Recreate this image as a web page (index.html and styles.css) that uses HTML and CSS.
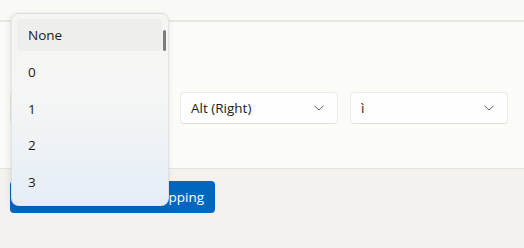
FILE: index.html
```html
<!DOCTYPE html>
<html>
<head>
<meta charset="utf-8">
<link rel="stylesheet" href="styles.css">
</head>
<body>
<div class="page">
  <div class="topband"></div>
  <div class="content">
    <div class="row">
      <div class="combo"><span></span><svg class="chev" viewBox="0 0 10 6"><path d="M0.5 0.8 L5 5 L9.5 0.8"/></svg></div>
      <div class="combo"><span>Alt (Right)</span><svg class="chev" viewBox="0 0 10 6"><path d="M0.5 0.8 L5 5 L9.5 0.8"/></svg></div>
      <div class="combo"><span>ì</span><svg class="chev" viewBox="0 0 10 6"><path d="M0.5 0.8 L5 5 L9.5 0.8"/></svg></div>
    </div>
  </div>
  <div class="footer">
    <button class="primary">Test key remapping</button>
  </div>
  <div class="popup">
    <div class="item selected">None</div>
    <div class="item">0</div>
    <div class="item">1</div>
    <div class="item">2</div>
    <div class="item">3</div>
    <div class="scrollbar"></div>
  </div>
</div>
</body>
</html>
```

FILE: styles.css
```css
html, body {
  margin: 0;
  padding: 0;
}
body {
  width: 524px;
  height: 248px;
  overflow: hidden;
  background: #f3f2ee;
  font-family: "Open Sans", "Noto Sans", sans-serif;
  font-size: 13.5px;
  color: #1b1b1b;
}
.page {
  position: relative;
  height: 248px;
}
.topband {
  height: 20px;
  background: #f9f9f5;
  border-bottom: 2px solid #e8e8e3;
}
.content {
  height: 147px;
  background: #fbfbf7;
  border-bottom: 1px solid #e3e3de;
  padding: 70px 0 0 10px;
  box-sizing: border-box;
}
.row {
  display: flex;
  gap: 12px;
}
.combo {
  width: 158px;
  height: 32px;
  box-sizing: border-box;
  background: #fefefe;
  border: 1px solid #ebebe7;
  border-bottom-color: #e0e0db;
  border-radius: 4px;
  display: flex;
  align-items: center;
  justify-content: space-between;
  padding: 0 13px 0 10px;
}
.combo span {
  line-height: 20px;
}
.chev {
  width: 10px;
  height: 6px;
  fill: none;
  stroke: #666;
  stroke-width: 1;
}
.footer {
  padding: 12px 0 0 10px;
}
.primary {
  width: 205px;
  height: 32px;
  background: #0067c0;
  color: #fff;
  border: none;
  border-radius: 4px;
  font-family: inherit;
  font-size: 13.5px;
  display: flex;
  align-items: center;
  justify-content: flex-end;
  padding: 0 11px 1px 0;
}
.popup {
  position: absolute;
  left: 11px;
  top: 13px;
  width: 158px;
  height: 193px;
  box-sizing: border-box;
  border-radius: 8px;
  border: 1px solid rgba(0,0,0,0.06);
  background: linear-gradient(180deg, #f5f5f2 0%, #f5f6f5 40%, #eef2f6 70%, #e4edf7 100%);
  box-shadow: -1px 2px 6px rgba(0,0,0,0.10), 0 0 1px rgba(0,0,0,0.12);
  padding: 5px 6px 0 5px;
  display: flex;
  flex-direction: column;
  gap: 4.75px;
}
.item {
  height: 32px;
  border-radius: 4px;
  display: flex;
  align-items: center;
  padding-left: 11px;
}
.item.selected {
  background: #eeeeea;
}
.scrollbar {
  position: absolute;
  left: 151px;
  top: 16px;
  width: 3px;
  height: 21px;
  border-radius: 2px;
  background: #7d7d7b;
}
```
